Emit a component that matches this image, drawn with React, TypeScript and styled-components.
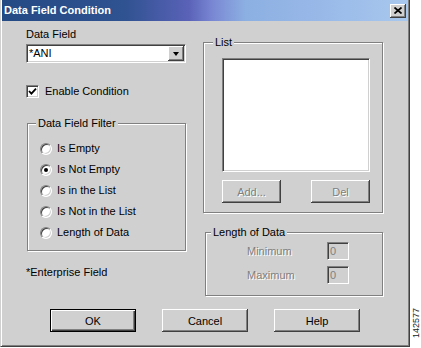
import React from "react";
import styled, { createGlobalStyle, css } from "styled-components";

const GRAY = "#d0d0d0";

const Global = createGlobalStyle`
  html, body { margin: 0; padding: 0; background: #fff; }
  body {
    font-family: "Liberation Sans", Arial, sans-serif;
    font-size: 11px;
    color: #000;
  }
`;

const Page = styled.div`
  display: flex;
  align-items: flex-start;
  width: 421px;
  height: 348px;
`;

const Window = styled.div`
  box-sizing: border-box;
  width: 410px;
  height: 347px;
  background: ${GRAY};
  border: 1px solid;
  border-top: none;
  border-color: ${GRAY} #404040 #404040 ${GRAY};
  box-shadow: inset 1px 0 #fff, inset -1px -1px #808080;
  padding: 0 1px 1px 1px;
  display: flex;
  flex-direction: column;
`;

const TitleBar = styled.div`
  height: 21px;
  flex: none;
  display: flex;
  align-items: center;
  justify-content: space-between;
  padding: 0 2px 0 2px;
  background: linear-gradient(
    to right,
    #244a84 0%,
    #2f5290 30%,
    #5a62b8 46%,
    #7a88d4 52%,
    #8cb0e2 60%,
    #98b8e8 78%,
    #a8c8ee 100%
  );
`;

const Title = styled.span`
  color: #fff;
  font-weight: bold;
  font-size: 11px;
  line-height: 13px;
`;

const CloseBtn = styled.div`
  width: 16px;
  height: 14px;
  box-sizing: border-box;
  background: ${GRAY};
  box-shadow: inset -1px -1px #404040, inset 1px 1px #fff,
    inset -2px -2px #808080;
  display: flex;
  align-items: center;
  justify-content: center;
`;

const Content = styled.div`
  flex: 1;
  display: flex;
  flex-direction: column;
  padding: 7px 0 0 24px;
`;

const MainGrid = styled.div`
  display: grid;
  grid-template-columns: 160px 180px;
  column-gap: 17px;
  align-items: start;
`;

const Column = styled.div<{ $top?: number }>`
  display: flex;
  flex-direction: column;
  margin-top: ${(p) => p.$top ?? 0}px;
`;

const Label = styled.div<{ $top?: number }>`
  line-height: 13px;
  margin-top: ${(p) => p.$top ?? 0}px;
`;

const sunken = css`
  box-sizing: border-box;
  border: 1px solid;
  border-color: #808080 #fff #fff #808080;
  box-shadow: inset 1px 1px #404040, inset -1px -1px ${GRAY};
`;

const raised = css`
  box-shadow: inset -1px -1px #404040, inset 1px 1px #fff,
    inset -2px -2px #808080, inset 2px 2px ${GRAY};
`;

const ComboBox = styled.div`
  ${sunken};
  margin-top: 3px;
  height: 19px;
  width: 160px;
  background: #fff;
  display: flex;
  align-items: stretch;
  padding: 1px 1px 1px 2px;
`;

const ComboText = styled.span`
  flex: 1;
  line-height: 15px;
`;

const DropButton = styled.div`
  width: 16px;
  background: ${GRAY};
  ${raised};
  display: flex;
  align-items: center;
  justify-content: center;
`;

const Arrow = styled.span`
  width: 0;
  height: 0;
  border-left: 3.5px solid transparent;
  border-right: 3.5px solid transparent;
  border-top: 4px solid #000;
  margin-left: -1px;
`;

const CheckRow = styled.label`
  margin-top: 22px;
  display: flex;
  align-items: center;
  gap: 6px;
  height: 13px;
  line-height: 13px;
`;

const CheckBox = styled.span`
  ${sunken};
  width: 13px;
  height: 13px;
  background: #fff;
  display: flex;
  align-items: center;
  justify-content: center;
`;

const Group = styled.fieldset<{ $top?: number; $left?: number }>`
  margin: ${(p) => p.$top ?? 0}px 0 0 ${(p) => p.$left ?? 0}px;
  padding: 0;
  min-width: 0;
  border: 1px solid #808080;
  box-shadow: inset 1px 1px #fff, 1px 1px #fff;
`;

const Legend = styled.legend<{ $left: number }>`
  margin-left: ${(p) => p.$left}px;
  padding: 0 2px;
  line-height: 13px;
  background: ${GRAY};
`;

const RadioList = styled.div`
  display: flex;
  flex-direction: column;
  padding: 8px 0 7px 12px;
`;

const RadioRow = styled.label`
  display: flex;
  align-items: center;
  gap: 5px;
  height: 21px;
  line-height: 13px;
`;

const Radio = styled.span<{ $checked?: boolean }>`
  ${sunken};
  width: 12px;
  height: 12px;
  border-radius: 50%;
  background: #fff;
  display: flex;
  align-items: center;
  justify-content: center;
  &::after {
    content: "";
    width: 4px;
    height: 4px;
    border-radius: 50%;
    background: ${(p) => (p.$checked ? "#000" : "transparent")};
  }
`;

const ListPanel = styled.div`
  display: flex;
  flex-direction: column;
  padding: 9px 0 9px 18px;
  width: 148px;
  gap: 8px;
`;

const ListBox = styled.div`
  ${sunken};
  width: 148px;
  height: 114px;
  background: #fff;
`;

const ButtonPair = styled.div`
  display: flex;
  justify-content: space-between;
`;

const Button = styled.button<{ $w: number; $default?: boolean; $disabled?: boolean }>`
  box-sizing: border-box;
  width: ${(p) => p.$w}px;
  height: 23px;
  margin: 0;
  padding: 0;
  font-family: "Liberation Sans", Arial, sans-serif;
  font-size: 11px;
  background: ${GRAY};
  color: ${(p) => (p.$disabled ? "#808080" : "#000")};
  text-shadow: ${(p) => (p.$disabled ? "1px 1px #fff" : "none")};
  ${(p) =>
    p.$default
      ? css`
          border: 1px solid #000;
          box-shadow: inset 1px 1px #fff, inset -1px -1px #404040,
            inset -2px -2px #808080;
        `
      : css`
          border: none;
          ${raised};
        `}
`;

const LengthGrid = styled.div`
  display: grid;
  grid-template-columns: 80px 22px;
  row-gap: 6px;
  align-items: center;
  padding: 3px 0 11px 41px;
`;

const DisabledLabel = styled.span`
  color: #808080;
  text-shadow: 1px 1px #fff;
  line-height: 13px;
`;

const NumBox = styled.div`
  ${sunken};
  width: 22px;
  height: 18px;
  background: ${GRAY};
  color: #808080;
  padding-left: 2px;
  line-height: 16px;
`;

const ButtonRow = styled.div`
  display: flex;
  gap: 26px;
  margin-top: 13px;
  padding-left: 24px;
`;

const Side = styled.div`
  align-self: flex-end;
  margin: 0 0 10px 1px;
  width: 10px;
  writing-mode: vertical-rl;
  transform: rotate(180deg);
  font-size: 9px;
  line-height: 10px;
  color: #222;
`;

const radios = [
  { label: "Is Empty", checked: false },
  { label: "Is Not Empty", checked: true },
  { label: "Is in the List", checked: false },
  { label: "Is Not in the List", checked: false },
  { label: "Length of Data", checked: false },
];

export default function App() {
  return (
    <>
      <Global />
      <Page>
        <Window>
          <TitleBar>
            <Title>Data Field Condition</Title>
            <CloseBtn>
              <svg width="8" height="7" viewBox="0 0 8 7">
                <path d="M0.5 0.5 L7.5 6.5 M7.5 0.5 L0.5 6.5" stroke="#000" strokeWidth="1.7" />
              </svg>
            </CloseBtn>
          </TitleBar>
          <Content>
            <MainGrid>
              <Column>
                <Label>Data Field</Label>
                <ComboBox>
                  <ComboText>*ANI</ComboText>
                  <DropButton>
                    <Arrow />
                  </DropButton>
                </ComboBox>
                <CheckRow>
                  <CheckBox>
                    <svg width="9" height="9" viewBox="0 0 9 9">
                      <path d="M1 4 L3.4 6.6 L8 1.6" stroke="#000" strokeWidth="1.8" fill="none" />
                    </svg>
                  </CheckBox>
                  Enable Condition
                </CheckRow>
                <Group $top={19} $left={1}>
                  <Legend $left={8}>Data Field Filter</Legend>
                  <RadioList>
                    {radios.map((r) => (
                      <RadioRow key={r.label}>
                        <Radio $checked={r.checked} />
                        {r.label}
                      </RadioRow>
                    ))}
                  </RadioList>
                </Group>
                <Label $top={15}>*Enterprise Field</Label>
              </Column>
              <Column $top={8}>
                <Group>
                  <Legend $left={9}>List</Legend>
                  <ListPanel>
                    <ListBox />
                    <ButtonPair>
                      <Button $w={59} $disabled>Add...</Button>
                      <Button $w={59} $disabled>Del</Button>
                    </ButtonPair>
                  </ListPanel>
                </Group>
                <Group $top={13} $left={2}>
                  <Legend $left={5}>Length of Data</Legend>
                  <LengthGrid>
                    <DisabledLabel>Minimum</DisabledLabel>
                    <NumBox>0</NumBox>
                    <DisabledLabel>Maximum</DisabledLabel>
                    <NumBox>0</NumBox>
                  </LengthGrid>
                </Group>
              </Column>
            </MainGrid>
            <ButtonRow>
              <Button $w={86} $default>OK</Button>
              <Button $w={86}>Cancel</Button>
              <Button $w={86}>Help</Button>
            </ButtonRow>
          </Content>
        </Window>
        <Side>142577</Side>
      </Page>
    </>
  );
}
